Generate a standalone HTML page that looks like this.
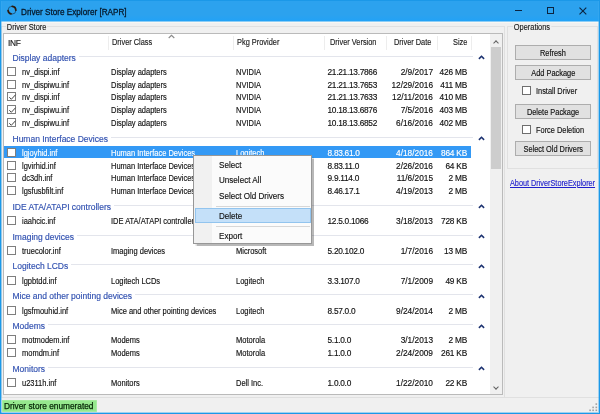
<!DOCTYPE html>
<html><head><meta charset="utf-8">
<style>
*{margin:0;padding:0;box-sizing:border-box}
html,body{width:600px;height:414px;overflow:hidden;background:#f0f0f0;font-family:"Liberation Sans",sans-serif;color:#000;-webkit-text-stroke:0.15px currentColor}
.abs{position:absolute}
#win{position:absolute;left:0;top:0;width:600px;height:414px;border:1px solid #1b98e8;box-shadow:inset 1px 0 0 rgba(60,170,240,.45),inset -1px -1px 0 rgba(60,170,240,.45)}
#title{position:absolute;left:0;top:0;width:600px;height:21px;background:linear-gradient(#2ca2ee 0,#2ca2ee 15px,#22a2f6 21px)}
#title .t{position:absolute;left:21px;top:5.5px;font-size:9.4px;line-height:12px;color:#06182a;white-space:nowrap;transform-origin:0 0;transform:scaleX(0.87);-webkit-text-stroke:0.3px #06182a}
#gb1{position:absolute;left:1px;top:26px;width:504px;height:372px;border:1px solid #e0e0e0}
.gbl{position:absolute;background:#f0f0f0;font-size:8.5px;line-height:9px;white-space:nowrap;color:#1a1a1a;padding:0 1px;transform-origin:0 0;transform:scaleX(0.87)}
#lv{position:absolute;left:3px;top:33px;width:500px;height:362px;border:1px solid #bababa;background:#fff;overflow:hidden}
.hd{position:absolute;top:0;left:0;width:486px;height:18px}
.hd span{position:absolute;top:3.2px;font-size:9.2px;line-height:10px;white-space:nowrap;color:#1a1a1a;transform-origin:0 0;transform:scaleX(0.805)}
.hd i{position:absolute;top:2px;width:1px;height:14px;background:#ededed}
.row{position:absolute;left:0;width:486px;height:12px;font-size:7.5px;line-height:12px;color:#111;white-space:nowrap;}
.row span{position:absolute;top:1px}
.row.sel{color:#fff}
.row.sel::before{content:"";position:absolute;left:0;top:0;width:467px;height:12px;background:#3399f5}

.cb{position:absolute;left:3px;top:2px;width:9px;height:9px;border:1px solid #7e7e7e;background:#fff}
.cb svg{position:absolute;left:0;top:0}
.c0,.c1,.c2{font-size:8.7px;transform-origin:0 0;transform:scaleX(0.862)}.c0{left:17.6px}.c1{left:106.8px}.c2{left:231.8px}.c3{left:324.5px}
.c3{font-size:8.3px;left:323.5px;letter-spacing:-0.27px}.c4{right:57px;text-align:right;font-size:8.3px}.c5{right:23px;text-align:right;font-size:8.3px;letter-spacing:-0.2px}
.gh{position:absolute;left:0;width:486px;height:12px;font-size:8.5px;line-height:12px;color:#3050b0;white-space:nowrap;display:flex;align-items:center;padding-left:8.5px}
.gh span{position:relative}
.gh .gl{position:relative;flex:1;height:1px;background:#e3e5ec;margin:0 17px 0 3px;top:-1.5px}
.gh .ga{position:absolute;right:5.2px;top:3.5px;width:7px;height:5px}
.gh .ga svg{position:absolute;left:0;top:0}
#sb{position:absolute;left:486px;top:0;width:12px;height:360px;background:#f0f0f0}
#thumb{position:absolute;left:1px;top:13px;width:10px;height:122px;background:#cdcdcd}
#menu{position:absolute;left:193px;top:155px;width:119px;height:88.5px;background:#fbfbfb;border:1px solid #979797;box-shadow:1.5px 1.5px 1px rgba(0,0,0,.28)}
#menu .gut{position:absolute;left:0;top:0;width:18px;height:86.5px;background:#f1f1f1}
#menu span{position:absolute;left:25px;font-size:8.9px;line-height:10px;color:#111;white-space:nowrap;transform-origin:0 0;transform:scaleX(0.91)}
#menu .sep{position:absolute;left:22px;width:94px;height:1px;background:#d7d7d7}
#menu .hi{position:absolute;left:0.5px;top:52px;width:116px;height:15px;background:#c4e0f9;border:1px solid #92c4ee}
#gb2{position:absolute;left:507px;top:26px;width:91px;height:143px;border:1px solid #e0e0e0}
.btn{position:absolute;left:515px;width:76px;height:15px;background:#e1e1e1;border:1px solid #adadad;font-size:8.5px;line-height:14px;text-align:center;color:#111;white-space:nowrap}
.btn span{display:inline-block;transform:scaleX(0.87)}
.ck{position:absolute;left:521.5px;width:9.5px;height:9.5px;border:1px solid #6e6e6e;background:#fff}
.ckl{position:absolute;left:535.5px;font-size:8.5px;line-height:10px;color:#111;white-space:nowrap;transform-origin:0 0;transform:scaleX(0.87)}
#about{position:absolute;left:510px;top:178px;font-size:8.4px;line-height:10px;color:#1f1fcc;text-decoration:underline;white-space:nowrap;transform-origin:0 0;transform:scaleX(0.87)}
#status{position:absolute;left:2px;top:399.5px;width:95px;height:12px;background:#96e88e;box-shadow:inset 0 0 0 0.6px #b4f0ae}
#status span{position:absolute;left:2px;top:0.5px;font-size:8.3px;line-height:12px;color:#052605;white-space:nowrap;-webkit-text-stroke:0.25px #052605}
#stline{position:absolute;left:1px;top:397px;width:598px;height:1px;background:#e0e0e0}
</style></head><body><div id="root" style="position:absolute;left:0;top:0;width:600px;height:414px;will-change:transform">
<div id="title">
 <svg class="abs" style="left:6px;top:4px" width="12" height="12" viewBox="0 0 12 12">
  <circle cx="6" cy="6.2" r="3.9" fill="none" stroke="#1a5a86" stroke-width="1"/>
  <g fill="none" stroke="#2b1a0e" stroke-width="1.7" stroke-linecap="round"><path d="M6.2 2.4A3.9 3.9 0 0 1 9.8 6.2"/><path d="M5 9.9A3.9 3.9 0 0 1 2.1 6.6"/></g>
 </svg>
 <div class="t">Driver Store Explorer [RAPR]</div>
 <div class="abs" style="left:514.5px;top:10px;width:7.5px;height:1.1px;background:#0b2440"></div>
 <div class="abs" style="left:546.7px;top:7.2px;width:7.2px;height:7.2px;border:1.1px solid #0b2440"></div>
 <svg class="abs" style="left:578px;top:6px" width="10" height="10" viewBox="0 0 10 10"><path d="M1.5 1.6L8.3 8.4M8.3 1.6L1.5 8.4" stroke="#0b2440" stroke-width="1.1"/></svg>
</div>
<div class="abs" style="left:1px;top:21px;width:598px;height:1px;background:#8ccdf6"></div><div class="abs" style="left:1px;top:22px;width:598px;height:1px;background:#f8f7f3"></div>
<div id="gb1"></div>
<div class="gbl" style="left:6px;top:22.8px">Driver Store</div>
<div id="lv">
 <div class="hd">
  <span style="left:4px;top:4.2px;transform:none;font-size:8.4px;letter-spacing:-0.3px">INF</span><i style="left:104px"></i>
  <span style="left:108px">Driver Class</span><i style="left:228.5px"></i>
  <span style="left:233px">Pkg Provider</span><i style="left:320.4px"></i>
  <span style="left:325.5px">Driver Version</span><i style="left:382.3px"></i>
  <span style="left:390px">Driver Date</span><i style="left:433px"></i>
  <span style="left:448.5px">Size</span><i style="left:467px"></i>
  <svg class="abs" style="left:163.5px;top:0px" width="7" height="5" viewBox="0 0 7 5"><path d="M0.7 4L3.5 1.3L6.3 4" fill="none" stroke="#8a8a8a" stroke-width="1.1"/></svg>
 </div>
 <div id="rows" class="abs" style="left:0;top:-34px;width:486px;height:400px">
<div class="gh" style="top:51.80px"><span>Display adapters</span><i class="gl"></i><b class="ga"><svg width="7" height="5" viewBox="0 0 7 5"><path d="M0.9 3.9L3.5 1.3L6.1 3.9" fill="none" stroke="#1c3270" stroke-width="1.6"/></svg></b></div>
<div class="row" style="top:65.00px"><b class="cb"></b><span class="c0">nv_dispi.inf</span><span class="c1">Display adapters</span><span class="c2">NVIDIA</span><span class="c3">21.21.13.7866</span><span class="c4">2/9/2017</span><span class="c5">426 MB</span></div>
<div class="row" style="top:77.72px"><b class="cb"></b><span class="c0">nv_dispiwu.inf</span><span class="c1">Display adapters</span><span class="c2">NVIDIA</span><span class="c3">21.21.13.7653</span><span class="c4">12/29/2016</span><span class="c5">411 MB</span></div>
<div class="row" style="top:90.44px"><b class="cb"><svg width="9" height="9" viewBox="0 0 9 9"><path d="M1.3 4.2L3.3 6.3L7.5 1.8" fill="none" stroke="#444" stroke-width="1"/></svg></b><span class="c0">nv_dispi.inf</span><span class="c1">Display adapters</span><span class="c2">NVIDIA</span><span class="c3">21.21.13.7633</span><span class="c4">12/11/2016</span><span class="c5">410 MB</span></div>
<div class="row" style="top:103.16px"><b class="cb"><svg width="9" height="9" viewBox="0 0 9 9"><path d="M1.3 4.2L3.3 6.3L7.5 1.8" fill="none" stroke="#444" stroke-width="1"/></svg></b><span class="c0">nv_dispiwu.inf</span><span class="c1">Display adapters</span><span class="c2">NVIDIA</span><span class="c3">10.18.13.6876</span><span class="c4">7/5/2016</span><span class="c5">403 MB</span></div>
<div class="row" style="top:115.88px"><b class="cb"><svg width="9" height="9" viewBox="0 0 9 9"><path d="M1.3 4.2L3.3 6.3L7.5 1.8" fill="none" stroke="#444" stroke-width="1"/></svg></b><span class="c0">nv_dispiwu.inf</span><span class="c1">Display adapters</span><span class="c2">NVIDIA</span><span class="c3">10.18.13.6852</span><span class="c4">6/16/2016</span><span class="c5">402 MB</span></div>
<div class="gh" style="top:132.58px"><span>Human Interface Devices</span><i class="gl"></i><b class="ga"><svg width="7" height="5" viewBox="0 0 7 5"><path d="M0.9 3.9L3.5 1.3L6.1 3.9" fill="none" stroke="#1c3270" stroke-width="1.6"/></svg></b></div>
<div class="row sel" style="top:145.78px"><b class="cb"></b><span class="c0">lgjoyhid.inf</span><span class="c1">Human Interface Devices</span><span class="c2">Logitech</span><span class="c3">8.83.61.0</span><span class="c4">4/18/2016</span><span class="c5">864 KB</span></div>
<div class="row" style="top:158.50px"><b class="cb"></b><span class="c0">lgvirhid.inf</span><span class="c1">Human Interface Devices</span><span class="c2">Logitech</span><span class="c3">8.83.11.0</span><span class="c4">2/26/2016</span><span class="c5">64 KB</span></div>
<div class="row" style="top:171.22px"><b class="cb"></b><span class="c0">dc3dh.inf</span><span class="c1">Human Interface Devices</span><span class="c2">Logitech</span><span class="c3">9.9.114.0</span><span class="c4">11/6/2015</span><span class="c5">2 MB</span></div>
<div class="row" style="top:183.94px"><b class="cb"></b><span class="c0">lgsfusbfilt.inf</span><span class="c1">Human Interface Devices</span><span class="c2">Logitech</span><span class="c3">8.46.17.1</span><span class="c4">4/19/2013</span><span class="c5">2 MB</span></div>
<div class="gh" style="top:200.64px"><span>IDE ATA/ATAPI controllers</span><i class="gl"></i><b class="ga"><svg width="7" height="5" viewBox="0 0 7 5"><path d="M0.9 3.9L3.5 1.3L6.1 3.9" fill="none" stroke="#1c3270" stroke-width="1.6"/></svg></b></div>
<div class="row" style="top:213.84px"><b class="cb"></b><span class="c0">iaahcic.inf</span><span class="c1">IDE ATA/ATAPI controllers</span><span class="c2">Intel</span><span class="c3">12.5.0.1066</span><span class="c4">3/18/2013</span><span class="c5">728 KB</span></div>
<div class="gh" style="top:230.54px"><span>Imaging devices</span><i class="gl"></i><b class="ga"><svg width="7" height="5" viewBox="0 0 7 5"><path d="M0.9 3.9L3.5 1.3L6.1 3.9" fill="none" stroke="#1c3270" stroke-width="1.6"/></svg></b></div>
<div class="row" style="top:243.74px"><b class="cb"></b><span class="c0">truecolor.inf</span><span class="c1">Imaging devices</span><span class="c2">Microsoft</span><span class="c3">5.20.102.0</span><span class="c4">1/7/2016</span><span class="c5">13 MB</span></div>
<div class="gh" style="top:260.44px"><span>Logitech LCDs</span><i class="gl"></i><b class="ga"><svg width="7" height="5" viewBox="0 0 7 5"><path d="M0.9 3.9L3.5 1.3L6.1 3.9" fill="none" stroke="#1c3270" stroke-width="1.6"/></svg></b></div>
<div class="row" style="top:273.64px"><b class="cb"></b><span class="c0">lgpbtdd.inf</span><span class="c1">Logitech LCDs</span><span class="c2">Logitech</span><span class="c3">3.3.107.0</span><span class="c4">7/1/2009</span><span class="c5">49 KB</span></div>
<div class="gh" style="top:290.34px"><span>Mice and other pointing devices</span><i class="gl"></i><b class="ga"><svg width="7" height="5" viewBox="0 0 7 5"><path d="M0.9 3.9L3.5 1.3L6.1 3.9" fill="none" stroke="#1c3270" stroke-width="1.6"/></svg></b></div>
<div class="row" style="top:303.54px"><b class="cb"></b><span class="c0">lgsfmouhid.inf</span><span class="c1">Mice and other pointing devices</span><span class="c2">Logitech</span><span class="c3">8.57.0.0</span><span class="c4">9/24/2014</span><span class="c5">2 MB</span></div>
<div class="gh" style="top:320.24px"><span>Modems</span><i class="gl"></i><b class="ga"><svg width="7" height="5" viewBox="0 0 7 5"><path d="M0.9 3.9L3.5 1.3L6.1 3.9" fill="none" stroke="#1c3270" stroke-width="1.6"/></svg></b></div>
<div class="row" style="top:333.44px"><b class="cb"></b><span class="c0">motmodem.inf</span><span class="c1">Modems</span><span class="c2">Motorola</span><span class="c3">5.1.0.0</span><span class="c4">3/1/2013</span><span class="c5">2 MB</span></div>
<div class="row" style="top:346.16px"><b class="cb"></b><span class="c0">momdm.inf</span><span class="c1">Modems</span><span class="c2">Motorola</span><span class="c3">1.1.0.0</span><span class="c4">2/24/2009</span><span class="c5">261 KB</span></div>
<div class="gh" style="top:362.86px"><span>Monitors</span><i class="gl"></i><b class="ga"><svg width="7" height="5" viewBox="0 0 7 5"><path d="M0.9 3.9L3.5 1.3L6.1 3.9" fill="none" stroke="#1c3270" stroke-width="1.6"/></svg></b></div>
<div class="row" style="top:376.06px"><b class="cb"></b><span class="c0">u2311h.inf</span><span class="c1">Monitors</span><span class="c2">Dell Inc.</span><span class="c3">1.0.0.0</span><span class="c4">1/22/2010</span><span class="c5">22 KB</span></div>
 </div>
 <div id="sb">
  <b class="abs" style="left:4px;top:7px;width:4px;height:4px;border-left:1px solid #606060;border-top:1px solid #606060;transform:rotate(45deg)"></b>
  <div id="thumb"></div>
  <b class="abs" style="left:4px;top:351px;width:4px;height:4px;border-left:1px solid #606060;border-top:1px solid #606060;transform:rotate(-135deg)"></b>
 </div>
</div>
<div id="menu">
 <div class="gut"></div>
 <span style="top:3.5px">Select</span>
 <span style="top:19px">Unselect All</span>
 <span style="top:34.5px">Select Old Drivers</span>
 <div class="sep" style="top:49.5px"></div>
 <div class="hi"></div>
 <span style="top:54.5px">Delete</span>
 <div class="sep" style="top:70px"></div>
 <span style="top:74.5px">Export</span>
</div>
<div id="gb2"></div>
<div class="gbl" style="left:513px;top:22.8px">Operations</div>
<div class="btn" style="top:45px"><span>Refresh</span></div>
<div class="btn" style="top:65px"><span>Add Package</span></div>
<div class="ck" style="top:85.5px"></div><div class="ckl" style="top:85.5px">Install Driver</div>
<div class="btn" style="top:104px"><span>Delete Package</span></div>
<div class="ck" style="top:124.5px"></div><div class="ckl" style="top:124.5px">Force Deletion</div>
<div class="btn" style="top:141px"><span>Select Old Drivers</span></div>
<div id="about">About DriverStoreExplorer</div>
<div id="stline"></div>
<div id="status"><span>Driver store enumerated</span></div>
<svg class="abs" style="left:586px;top:400px" width="13" height="13"><g fill="#a0a0a0"><rect x="9.5" y="3.3" width="1.6" height="1.6"/><rect x="6.3" y="6.6" width="1.6" height="1.6"/><rect x="9.5" y="6.6" width="1.6" height="1.6"/><rect x="3.3" y="9.5" width="1.6" height="1.6"/><rect x="6.3" y="9.5" width="1.6" height="1.6"/><rect x="9.5" y="9.5" width="1.6" height="1.6"/></g></svg>
<div id="win"></div>
</div></body></html>
